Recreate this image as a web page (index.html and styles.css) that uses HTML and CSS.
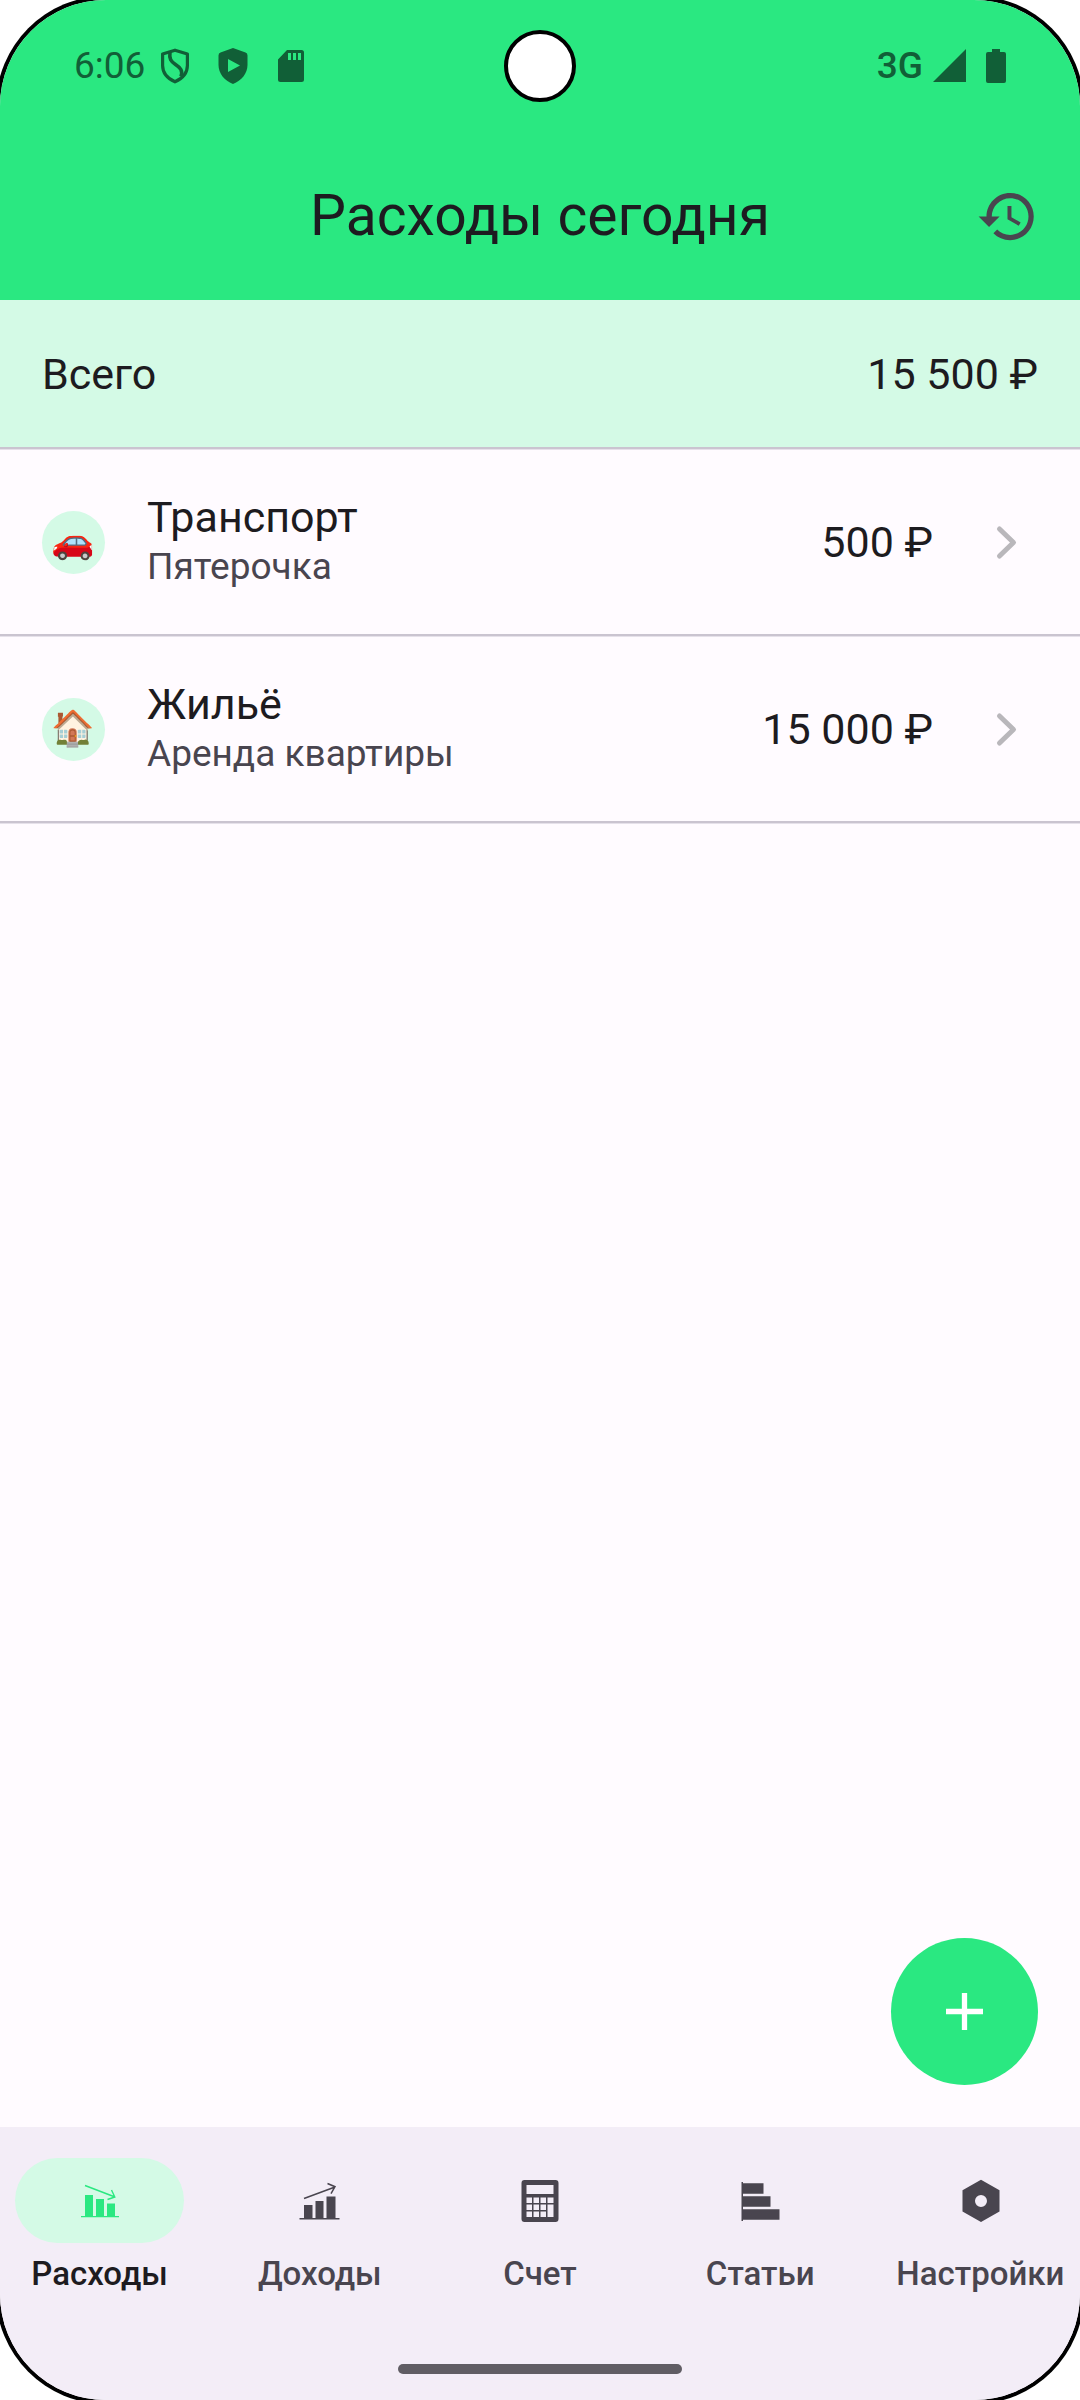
FILE: index.html
```html
<!DOCTYPE html>
<html lang="ru">
<head>
<meta charset="utf-8">
<meta name="viewport" content="width=device-width, initial-scale=1">
<title>Расходы сегодня</title>
<link rel="stylesheet" href="styles.css">
</head>
<body>
<div class="screen">
  <header class="header">
    <div class="status">
      <div class="status-left">
        <span class="clock">6:06</span>
        <span class="status-icons">
          <svg class="status-icon" viewBox="0 0 30 36" aria-hidden="true">
            <path d="M15 2.2 27.4 6v11.500c0 7-5 13-12.400 16.300C7.600 30.500 2.600 24.500 2.600 17.500V6z" fill="none" stroke="currentColor" stroke-width="3.200" stroke-linejoin="round"/>
            <path d="M10 4c-1 7 1 9.500 5.500 12.500 5 3.300 7.500 6 5.500 12" fill="none" stroke="currentColor" stroke-width="3.600"/>
          </svg>
          <svg class="status-icon" viewBox="0 0 30 36" aria-hidden="true">
            <path fill="currentColor" fill-rule="evenodd" d="M15 0 27.500 4.600Q29.500 5.300 29.500 7.500V17c0 8.500-6 15.500-14.500 19C6.500 32.500.5 25.500.5 17V7.500Q.5 5.300 2.500 4.600zM10 11v13l12-6.500z"/>
          </svg>
          <svg class="status-icon" viewBox="0 0 30 36" aria-hidden="true">
            <path fill="currentColor" fill-rule="evenodd" d="M11 2h14.500Q28 2 28 4.500v27q0 2.500-2.500 2.500h-21Q2 34 2 31.500V11.500zM12 5v7h3V5zm5 0v7h3V5zm5 0v7h3V5z"/>
          </svg>
        </span>
      </div>
      <div class="camera"></div>
      <div class="status-right">
        <span class="network">3G</span>
        <svg class="signal" viewBox="0 0 33 34" aria-hidden="true"><path fill="currentColor" d="M33 0v33H0z"/></svg>
        <svg class="battery" viewBox="0 0 20 34" aria-hidden="true"><path fill="currentColor" d="M6 0h8v3h4q2 0 2 2v27q0 2-2 2H2q-2 0-2-2V5q0-2 2-2h4z"/></svg>
      </div>
    </div>
    <div class="app-bar">
      <h1 class="title">Расходы сегодня</h1>
      <button class="icon-button" type="button" aria-label="История">
        <svg class="icon" viewBox="0 0 24 24" aria-hidden="true"><path fill="currentColor" d="M13 3c-4.970 0-9 4.030-9 9H1l3.890 3.890.07.14L9 12H6c0-3.870 3.130-7 7-7s7 3.130 7 7-3.130 7-7 7c-1.930 0-3.680-.79-4.940-2.060l-1.420 1.420C8.270 19.990 10.510 21 13 21c4.970 0 9-4.030 9-9s-4.030-9-9-9zm-1 5v5l4.280 2.540.72-1.210-3.500-2.080V8z"/></svg>
      </button>
    </div>
  </header>

  <main class="content">
    <div class="total">
      <span>Всего</span>
      <span>15 500 ₽</span>
    </div>
    <ul class="list">
      <li>
        <a class="row" href="#transport">
          <span class="emoji">🚗</span>
          <span class="row-text"><span class="row-title">Транспорт</span><span class="row-note">Пятерочка</span></span>
          <span class="amount">500 ₽</span>
          <svg class="icon chevron" viewBox="0 0 63 63" aria-hidden="true"><path d="M24.500 18 38.500 31.500 24.500 45" fill="none" stroke="currentColor" stroke-width="5" stroke-linecap="round" stroke-linejoin="round"/></svg>
        </a>
      </li>
      <li>
        <a class="row" href="#home">
          <span class="emoji">🏠</span>
          <span class="row-text"><span class="row-title">Жильё</span><span class="row-note">Аренда квартиры</span></span>
          <span class="amount">15 000 ₽</span>
          <svg class="icon chevron" viewBox="0 0 63 63" aria-hidden="true"><path d="M24.500 18 38.500 31.500 24.500 45" fill="none" stroke="currentColor" stroke-width="5" stroke-linecap="round" stroke-linejoin="round"/></svg>
        </a>
      </li>
    </ul>
    <button class="fab" type="button" aria-label="Добавить">
      <svg class="icon" viewBox="0 0 63 63" aria-hidden="true"><path d="M31.500 13v37M13 31.500h37" stroke="currentColor" stroke-width="5.300"/></svg>
    </button>
  </main>

  <footer class="footer">
    <nav class="nav">
      <a class="nav-item nav-item-active" href="#expenses" aria-current="page">
        <span class="pill"><svg class="icon" viewBox="0 0 63 63" aria-hidden="true">
          <path fill="currentColor" d="M17 26h8v21h3V30h8v17h3V34.500h8V47h4v1.300H13V47h4z"/>
          <path fill="none" stroke="currentColor" stroke-width="1.400" d="M17 16.500 47 28M43.500 21l3.300 7-7.300 2.500"/>
        </svg></span>
        <span class="nav-label">Расходы</span>
      </a>
      <a class="nav-item" href="#income">
        <span class="pill"><svg class="icon" viewBox="0 0 63 63" aria-hidden="true">
          <path fill="currentColor" d="M16 36h8.500v13h3V32h8v17h3V27.500h9V49h4v1.500h-40V49H16z"/>
          <path fill="none" stroke="currentColor" stroke-width="1.500" d="M16 29.500 47 18M39.500 14.500 47 17.700l-4 7"/>
        </svg></span>
        <span class="nav-label">Доходы</span>
      </a>
      <a class="nav-item" href="#account">
        <span class="pill"><svg class="icon" viewBox="0 0 63 63" aria-hidden="true">
          <path fill="currentColor" fill-rule="evenodd" d="M16.500 11h31q3 0 3 3v36q0 3-3 3h-31q-3 0-3-3V14q0-3 3-3zM18.500 16v9h27v-9zM18.500 28.500V34H24v-5.500zm7 0V34H31v-5.500zm7 0V34H38v-5.500zm7 0V34h6v-5.500zM18.500 35.500V41H24v-5.500zm7 0V41H31v-5.500zm7 0V41H38v-5.500zm7 0V48h6V35.500zM18.500 42.500V48H24v-5.500zm7 0V48H31v-5.500zm7 0V48H38v-5.500z"/>
        </svg></span>
        <span class="nav-label">Счет</span>
      </a>
      <a class="nav-item" href="#articles">
        <span class="pill"><svg class="icon" viewBox="0 0 63 63" aria-hidden="true">
          <path fill="currentColor" d="M12.500 13H14v1.300h20.500v10.400H14v2.600h27.500v10.400H14v2.600h36.500v10.400H14V52h-1.500z"/>
        </svg></span>
        <span class="nav-label">Статьи</span>
      </a>
      <a class="nav-item" href="#settings">
        <span class="pill"><svg class="icon" viewBox="0 0 63 63" aria-hidden="true">
          <path fill="currentColor" fill-rule="evenodd" d="M32 10.800 50.500 21.300v21.200L32 53 13.500 42.500V21.300zM32 26a6 6 0 1 0 0 12 6 6 0 1 0 0-12z"/>
        </svg></span>
        <span class="nav-label">Настройки</span>
      </a>
    </nav>
    <div class="gesture"><div class="gesture-bar"></div></div>
  </footer>
</div>
</body>
</html>
```
FILE: styles.css
```css
:root {
  --green: #2ae881;
  --mint: #d4fae6;
  --surface: #fffbff;
  --bar: #f3edf7;
  --text: #1d1b20;
  --muted: #49454f;
  --line: #cac4d0;
  --status: #115f37;
}

* {
  box-sizing: border-box;
}

html {
  background: #fff;
}

body {
  margin: 0;
  font-family: Roboto, "Liberation Sans", "Noto Color Emoji", sans-serif;
  color: var(--text);
}

a {
  color: inherit;
  text-decoration: none;
}

button {
  padding: 0;
  border: 0;
  background: none;
  color: inherit;
  display: grid;
  place-items: center;
}

.screen {
  display: flex;
  flex-direction: column;
  min-height: 100vh;
  overflow: hidden;
  border-radius: 106px;
  background: var(--surface);
  box-shadow: 0 0 0 4px #000;
}

.icon {
  display: block;
  flex: none;
  width: 63px;
  height: 63px;
}

/* Status bar and title */

.header {
  background: var(--green);
}

.status {
  display: grid;
  grid-template-columns: 1fr auto 1fr;
  align-items: center;
  height: 132px;
  padding: 0 74px;
  color: var(--status);
  font-size: 37px;
  line-height: 44px;
}

.status-left,
.status-right {
  display: flex;
  align-items: center;
}

.status-left {
  gap: 15px;
}

.status-right {
  justify-content: flex-end;
  gap: 10px;
}

.status-icons {
  display: flex;
  gap: 28px;
}

.status-icon {
  width: 30px;
  height: 36px;
}

.network {
  font-weight: 500;
}

.signal {
  width: 33px;
  height: 34px;
}

.battery {
  width: 20px;
  height: 34px;
  margin-left: 10px;
}

.camera {
  width: 72px;
  height: 72px;
  border: 4px solid #000;
  border-radius: 50%;
  background: #fff;
}

.app-bar {
  display: grid;
  grid-template-columns: 126px 1fr 126px;
  align-items: center;
  height: 168px;
  padding: 0 10px;
}

.title {
  grid-column: 2;
  margin: 0;
  font-size: 57px;
  font-weight: 400;
  line-height: 74px;
  text-align: center;
}

.icon-button {
  height: 126px;
  color: var(--muted);
}

/* Expense list */

.content {
  display: flex;
  flex: 1;
  flex-direction: column;
  font-size: 43px;
  line-height: 50px;
}

.total,
.row {
  display: flex;
  align-items: center;
  padding: 0 42px;
  border-bottom: 2px solid var(--line);
  box-shadow: 0 1px 0 #e6e1ea;
}

.total {
  justify-content: space-between;
  height: 149px;
  background: var(--mint);
}

.list {
  margin: 0;
  padding: 0;
  list-style: none;
}

.row {
  gap: 42px;
  height: 187px;
  padding-top: 1px;
}

.emoji {
  display: grid;
  flex: none;
  place-items: center;
  width: 63px;
  height: 63px;
  border-radius: 50%;
  background: var(--mint);
  font-size: 35px;
}

.row-text {
  display: flex;
  flex: 1;
  flex-direction: column;
}

.row-note {
  color: var(--muted);
  font-size: 37px;
}

.chevron {
  color: #b9b7bb;
}

.fab {
  width: 147px;
  height: 147px;
  margin: auto 42px 42px auto;
  border-radius: 50%;
  background: var(--green);
  color: #fff;
}

/* Bottom navigation */

.footer {
  background: var(--bar);
}

.nav {
  display: grid;
  grid-template-columns: repeat(5, 1fr);
  gap: 21px;
  height: 210px;
  padding-top: 31px;
}

.nav-item {
  display: flex;
  flex-direction: column;
  align-items: center;
  gap: 10px;
  min-width: 0;
  color: var(--muted);
}

.pill {
  display: grid;
  place-items: center;
  width: 169px;
  height: 85px;
  border-radius: 43px;
}

.nav-label {
  font-size: 33px;
  font-weight: 500;
  line-height: 42px;
}

.nav-item-active .pill {
  background: var(--mint);
  color: var(--green);
}

.nav-item-active .nav-label {
  color: var(--text);
}

.gesture {
  display: grid;
  place-items: center;
  height: 63px;
}

.gesture-bar {
  width: 284px;
  height: 10px;
  border-radius: 5px;
  background: #605d64;
}
```
